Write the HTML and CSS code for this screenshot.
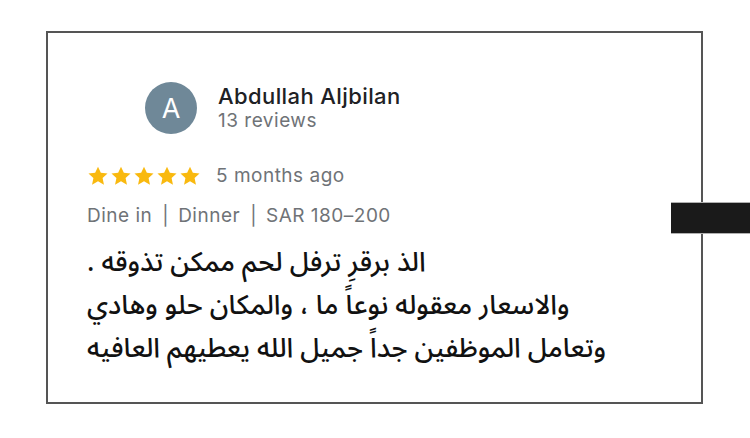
FILE: index.html
```html
<!DOCTYPE html>
<html lang="en">
<head>
<meta charset="utf-8">
<link rel="stylesheet" href="styles.css">
</head>
<body>
<div class="page">
  <div class="card">
    <div class="author">
      <div class="avatar">A</div>
      <div class="who">
        <div class="name">Abdullah Aljbilan</div>
        <div class="count">13 reviews</div>
      </div>
    </div>
    <div class="rating">
      <div class="stars">
        <svg viewBox="0 0 24 24" class="star"><path d="M12 1.8l3.1 6.7 7.3.8-5.4 5 1.5 7.2L12 17.8l-6.5 3.7 1.5-7.2-5.4-5 7.3-.8z"/></svg>
        <svg viewBox="0 0 24 24" class="star"><path d="M12 1.8l3.1 6.7 7.3.8-5.4 5 1.5 7.2L12 17.8l-6.5 3.7 1.5-7.2-5.4-5 7.3-.8z"/></svg>
        <svg viewBox="0 0 24 24" class="star"><path d="M12 1.8l3.1 6.7 7.3.8-5.4 5 1.5 7.2L12 17.8l-6.5 3.7 1.5-7.2-5.4-5 7.3-.8z"/></svg>
        <svg viewBox="0 0 24 24" class="star"><path d="M12 1.8l3.1 6.7 7.3.8-5.4 5 1.5 7.2L12 17.8l-6.5 3.7 1.5-7.2-5.4-5 7.3-.8z"/></svg>
        <svg viewBox="0 0 24 24" class="star"><path d="M12 1.8l3.1 6.7 7.3.8-5.4 5 1.5 7.2L12 17.8l-6.5 3.7 1.5-7.2-5.4-5 7.3-.8z"/></svg>
      </div>
      <span class="when">5 months ago</span>
    </div>
    <div class="meta">
      <span>Dine in</span><span class="sep">|</span><span>Dinner</span><span class="sep">|</span><span>SAR 180–200</span>
    </div>
    <div class="body" dir="rtl">
      <div class="line">الذ برقرِ ترفل لحم ممكن تذوقه .</div>
      <div class="line">والاسعار معقوله نوعاً ما ، والمكان حلو وهادي</div>
      <div class="line">وتعامل الموظفين جداً جميل الله يعطيهم العافيه</div>
    </div>
  </div>
  <div class="redact"></div>
</div>
</body>
</html>
```

FILE: styles.css
```css
html, body {
  margin: 0;
  padding: 0;
  background: #ffffff;
}
.page {
  position: relative;
  width: 750px;
  height: 438px;
  padding: 31px 0 0 46px;
  box-sizing: border-box;
  font-family: "Inter", "Roboto", "Liberation Sans", sans-serif;
}
.card {
  width: 657px;
  height: 373px;
  box-sizing: border-box;
  border: 2px solid #555555;
  padding: 49px 0 0 39px;
}
.author {
  display: flex;
  align-items: center;
  gap: 21px;
  margin-left: 58px;
}
.avatar {
  width: 52px;
  height: 52px;
  border-radius: 50%;
  background: #6f8898;
  color: #ffffff;
  font-size: 27px;
  display: flex;
  align-items: center;
  justify-content: center;
}
.who {
  display: flex;
  flex-direction: column;
}
.name {
  font-size: 22px;
  font-weight: 500;
  letter-spacing: 0.4px;
  color: #202124;
  line-height: 26px;
}
.count {
  font-size: 19px;
  letter-spacing: 0.5px;
  color: #6f7377;
  line-height: 24px;
}
.rating {
  display: flex;
  align-items: center;
  margin-top: 30px;
  gap: 15px;
}
.stars {
  display: flex;
  gap: 1px;
}
.star {
  width: 22px;
  height: 22px;
  fill: #f9b90f;
}
.when {
  font-size: 19px;
  letter-spacing: 0.5px;
  color: #6f7377;
}
.meta {
  margin-top: 17px;
  font-size: 19px;
  letter-spacing: 0.5px;
  color: #6f7377;
  display: flex;
}
.sep {
  margin: 0 9px 0 10px;
}
.body {
  margin-top: 14px;
  text-align: left;
  font-family: "Noto Sans Arabic", "Noto Naskh Arabic", "DejaVu Sans", sans-serif;
  font-size: 27px;
  font-weight: 500;
  line-height: 43px;
  color: #111111;
  width: 540px;
}
.line {
  white-space: nowrap;
}
.redact {
  position: absolute;
  left: 671px;
  top: 202px;
  width: 79px;
  height: 32px;
  box-sizing: border-box;
  background: #1a1a1a;
  border-top: 1px solid #b0b0b0;
  border-bottom: 1px solid #b0b0b0;
}
```
